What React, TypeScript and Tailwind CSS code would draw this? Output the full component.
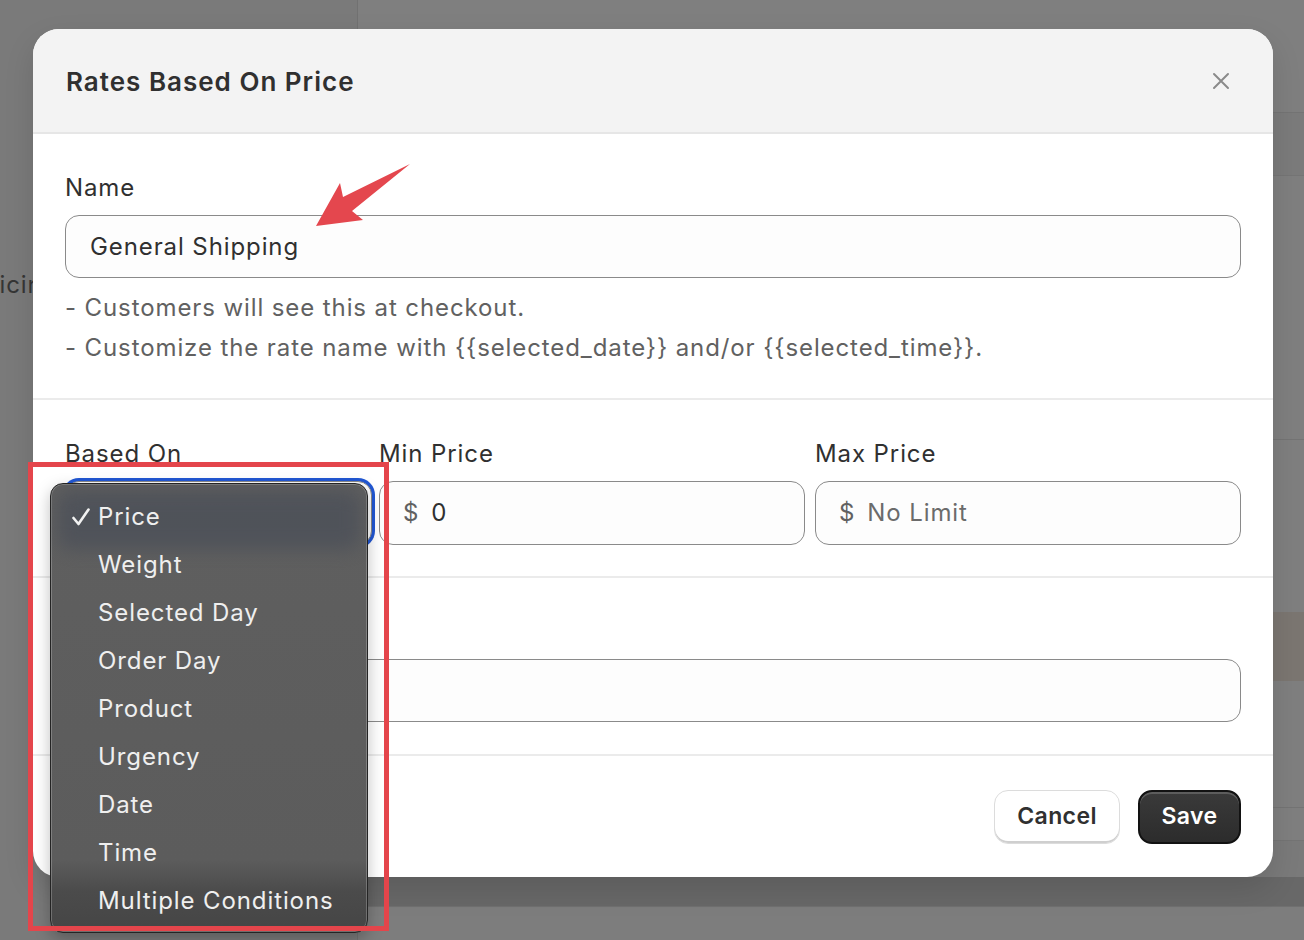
import React from "react";

const items = [
  "Price",
  "Weight",
  "Selected Day",
  "Order Day",
  "Product",
  "Urgency",
  "Date",
  "Time",
  "Multiple Conditions",
];

function Field({
  prefix,
  value,
  muted,
}: {
  prefix?: string;
  value: string;
  muted?: boolean;
}) {
  return (
    <div className="h-[64px] rounded-[14px] border border-[#8a8a8a] bg-[#fdfdfd] flex items-center px-[23px] text-[24px] tracking-[0.9px]">
      {prefix && <span className="text-[#616161] mr-[12px]">{prefix}</span>}
      <span className={muted ? "text-[#6b6b6b]" : "text-[#303030]"}>{value}</span>
    </div>
  );
}

export default function App() {
  return (
    <div className="relative w-[1304px] h-[940px] overflow-hidden bg-[#7f7f7f] font-['Inter',sans-serif]">
      {/* background app (dimmed) */}
      <div className="flex h-full">
        <aside className="w-[358px] shrink-0 bg-[#7a7a7a] border-r border-[#717171] flex flex-col">
          <div className="h-[268px]" />
          <div className="ml-[-27px] text-[24px] tracking-[0.9px] leading-[34px] text-[#353535]">Pricing</div>
        </aside>
        <main className="flex-1 flex flex-col">
          <div className="h-[113px] border-b border-[#747474]" />
          <div className="h-[63px] bg-[#7b7b7b] border-b border-[#757575]" />
          <div className="h-[264px] border-b border-[#747474]" />
          <div className="h-[172px]" />
          <div className="h-[69px] bg-[#7b7671]" />
          <div className="h-[127px] border-b border-[#747474]" />
          <div className="h-[33px] border-b border-[#747474]" />
          <div className="h-[36px] bg-[#7a7a7a]" />
          <div className="h-[30px] bg-[#686868] border-b border-[#707070]" />
          <div className="flex-1 bg-[#7d7d7d]" />
        </main>
      </div>

      {/* modal */}
      <div className="absolute left-[33px] top-[29px] w-[1240px] h-[848px] rounded-[26px] overflow-hidden bg-white flex flex-col shadow-[0_12px_30px_rgba(0,0,0,0.12)]">
        <header className="h-[105px] shrink-0 bg-[#f3f3f3] border-b-2 border-[#e6e6e6] flex items-center justify-between pl-[33px] pr-[43px]">
          <h1 className="text-[26px] font-semibold text-[#303030] tracking-[1px] pt-[2px]">Rates Based On Price</h1>
          <svg width="18" height="18" viewBox="0 0 18 18" fill="none">
            <path d="M2 2L16 16M16 2L2 16" stroke="#8a8a8a" strokeWidth="2" strokeLinecap="round" />
          </svg>
        </header>

        <section className="shrink-0 px-[32px] pt-[40px] pb-[30px] border-b-2 border-[#ebebeb] text-[24px] tracking-[0.9px]">
          <div className="leading-[28px] text-[#303030]">Name</div>
          <div className="mt-[13px] h-[63px] rounded-[14px] border border-[#8a8a8a] bg-[#fdfdfd] flex items-center px-[24px] text-[#303030]">
            General Shipping
          </div>
          <div className="mt-[10px] leading-[40px] text-[#616161]">
            <div>- Customers will see this at checkout.</div>
            <div>{"- Customize the rate name with {{selected_date}} and/or {{selected_time}}."}</div>
          </div>
        </section>

        <section className="shrink-0 px-[32px] pt-[40px] pb-[31px] border-b-2 border-[#ebebeb] flex text-[24px] tracking-[0.9px]">
          <div className="w-[307px] mr-[7px]">
            <div className="leading-[28px] text-[#303030]">Based On</div>
            <div className="mt-[13px] h-[64px] rounded-[14px] border border-[#8a8a8a] bg-[#fdfdfd] ring-[3px] ring-[#2157d3]" />
          </div>
          <div className="w-[426px] mr-[10px]">
            <div className="leading-[28px] text-[#303030]">Min Price</div>
            <div className="mt-[13px]">
              <Field prefix="$" value="0" />
            </div>
          </div>
          <div className="w-[426px]">
            <div className="leading-[28px] text-[#303030]">Max Price</div>
            <div className="mt-[13px]">
              <Field prefix="$" value="No Limit" muted />
            </div>
          </div>
        </section>

        <section className="shrink-0 px-[32px] pt-[40px] pb-[32px] border-b-2 border-[#ebebeb]">
          <div className="h-[28px]" />
          <div className="mt-[13px] h-[63px] rounded-[14px] border border-[#8a8a8a] bg-[#fdfdfd]" />
        </section>

        <footer className="flex-1 flex items-center justify-end gap-[18px] pr-[32px]">
          <button className="w-[126px] h-[54px] rounded-[14px] bg-white border border-[#dcdcdc] shadow-[inset_0_-2px_0_#cfcfcf] text-[23px] font-semibold tracking-[0.4px] text-[#303030]">
            Cancel
          </button>
          <button className="w-[103px] h-[54px] rounded-[14px] bg-[linear-gradient(#3a3a3a,#2c2c2c)] border-2 border-[#121212] shadow-[inset_0_2px_0_rgba(255,255,255,0.18)] text-[23px] font-semibold tracking-[0.4px] text-white">
            Save
          </button>
        </footer>
      </div>

      {/* dropdown menu */}
      <div className="absolute left-[50px] top-[483px] w-[318px] h-[450px] rounded-[13px] border border-[#242424] overflow-hidden bg-[linear-gradient(to_bottom,#5f5f5f_0%,#5c5c5c_84%,#4b4b4b_91%,#454545_100%)] shadow-[inset_0_0_0_1px_rgba(255,255,255,0.22),0_6px_16px_rgba(0,0,0,0.25)]">
        <div className="absolute left-[6px] right-[6px] top-[6px] h-[60px] rounded-[14px] bg-[#4d5159] blur-[9px] opacity-85" />
        <ul className="relative pt-[9px]">
          {items.map((it, i) => (
            <li key={it} className="h-[48px] flex items-center text-[24px] tracking-[0.9px] text-[#efefef]">
              <span className="w-[47px] flex justify-end pr-[7px]">
                {i === 0 && (
                  <svg width="20" height="20" viewBox="0 0 20 20" fill="none">
                    <path d="M2.5 11L7.5 17L17.5 2.5" stroke="#f2f2f2" strokeWidth="2.6" strokeLinecap="round" strokeLinejoin="round" />
                  </svg>
                )}
              </span>
              <span>{it}</span>
            </li>
          ))}
        </ul>
      </div>

      {/* annotation: red box */}
      <div className="absolute left-[28px] top-[462px] w-[361px] h-[469px] border-[5px] border-[#e4454b]" />

      {/* annotation: red arrow */}
      <svg className="absolute left-0 top-0" width="1304" height="940" viewBox="0 0 1304 940" fill="none">
        <polygon points="316,226 340,183 343,197 410,164 352,211 363,220" fill="#e4474e" />
      </svg>
    </div>
  );
}
